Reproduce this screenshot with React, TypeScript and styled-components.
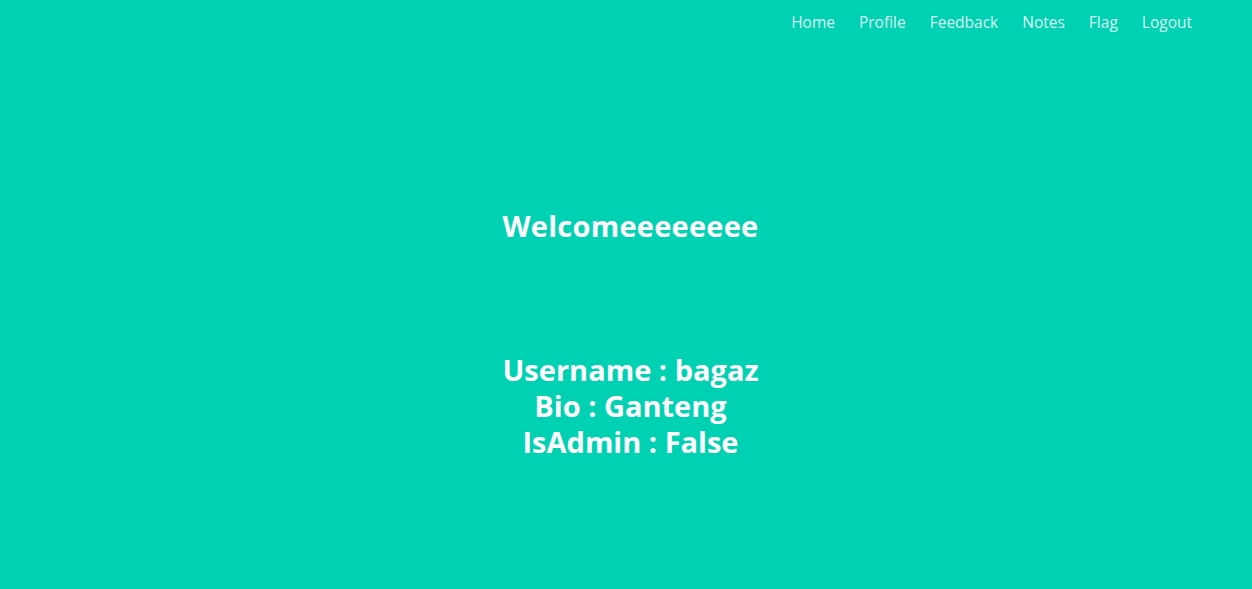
import React from "react";
import styled, { createGlobalStyle } from "styled-components";

const GlobalStyle = createGlobalStyle`
  html, body {
    margin: 0;
    padding: 0;
    background: #00d1b2;
  }
  body {
    font-family: "Open Sans", "Noto Sans", sans-serif;
    color: #ffffff;
    min-height: 589px;
  }
`;

const Page = styled.div`
  min-height: 589px;
  background: #00d1b2;
  display: flex;
  flex-direction: column;
`;

const Navbar = styled.nav`
  display: flex;
  justify-content: flex-end;
  padding: 11px 48px 0 0;
`;

const NavItem = styled.a`
  display: block;
  padding: 0 12px;
  font-size: 15.5px;
  line-height: 22px;
  color: rgba(255, 255, 255, 0.86);
  text-decoration: none;
  cursor: pointer;
`;

const Main = styled.main`
  display: flex;
  flex-direction: column;
  align-items: center;
  padding-left: 9px;
  text-align: center;
`;

const Title = styled.h1`
  margin: 175px 0 0;
  font-size: 29px;
  font-weight: 700;
  line-height: 36px;
  letter-spacing: 0.25px;
  color: #ffffff;
`;

const Info = styled.div`
  margin-top: 108px;
  display: flex;
  flex-direction: column;
  align-items: center;
`;

const InfoLine = styled.h2`
  margin: 0;
  font-size: 29px;
  font-weight: 700;
  line-height: 36px;
  color: #ffffff;
`;

const links = ["Home", "Profile", "Feedback", "Notes", "Flag", "Logout"];

const profile: [string, string][] = [
  ["Username", "bagaz"],
  ["Bio", "Ganteng"],
  ["IsAdmin", "False"],
];

export default function App() {
  return (
    <>
      <GlobalStyle />
      <Page>
        <Navbar>
          {links.map((l) => (
            <NavItem key={l}>{l}</NavItem>
          ))}
        </Navbar>
        <Main>
          <Title>Welcomeeeeeeee</Title>
          <Info>
            {profile.map(([k, v]) => (
              <InfoLine key={k}>
                {k} : {v}
              </InfoLine>
            ))}
          </Info>
        </Main>
      </Page>
    </>
  );
}
